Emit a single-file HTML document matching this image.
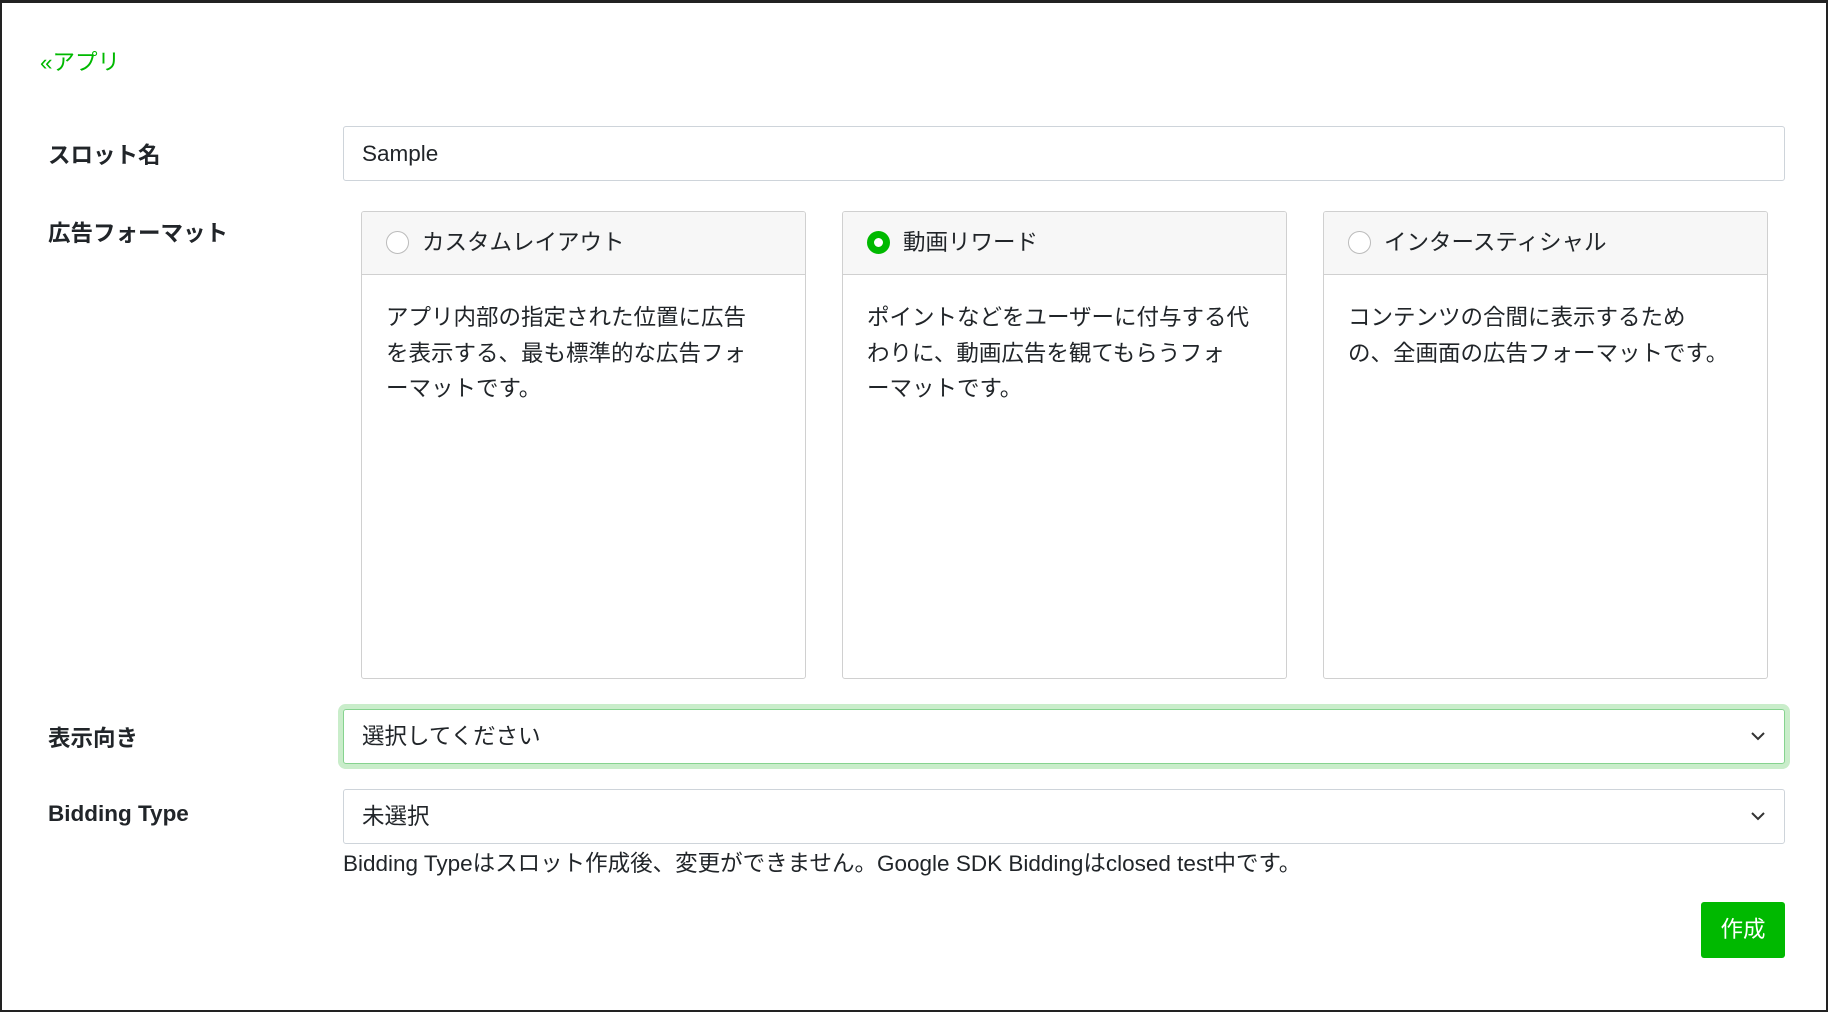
<!DOCTYPE html>
<html><head><meta charset="utf-8">
<style>
*{box-sizing:border-box;margin:0;padding:0}
body{width:1828px;height:1012px;background:#fff;font-family:"Liberation Sans","Noto Sans CJK JP",sans-serif;color:#212529;font-size:22.5px;position:relative;overflow:hidden}
.frame{position:absolute;left:0;top:0;width:1828px;height:1012px;border:2px solid #222;border-top-width:3px}
.abs{position:absolute}
.link{left:40px;top:45px;color:#00b900;font-size:22.5px}
.lbl{left:48px;font-weight:bold;font-size:22.5px}
.input{left:343px;width:1442px;height:55px;border:1px solid #ced4da;border-radius:3px;padding-left:18px;line-height:53px}
.card{top:211px;width:445px;height:468px;border:1px solid #d0d0d0;border-radius:3px;overflow:hidden}
.card .hd{height:63px;background:#f7f7f7;border-bottom:1px solid #d0d0d0;position:relative}
.card .hd .r{position:absolute;left:24px;top:19px;width:23px;height:23px;border-radius:50%;border:1.5px solid #bbb;background:#fff}
.card .hd .r.on{border:7px solid #00b900}
.card .hd span{position:absolute;left:60px;top:0;line-height:62px;white-space:nowrap}
.card .bd{padding:25px 0 0 24px;line-height:35.5px;white-space:nowrap}
.sel{left:343px;width:1442px;height:55px;border:1px solid #ced4da;border-radius:3px;padding-left:18px;line-height:53px}
.sel svg{position:absolute;right:18px;top:20px}
.btn{left:1701px;top:902px;width:84px;height:56px;background:#00b900;color:#fff;border-radius:3px;text-align:center;line-height:56px;font-size:22.5px}
</style></head><body>
<div class="frame"></div>
<div class="abs link">«アプリ</div>

<div class="abs lbl" style="top:138px">スロット名</div>
<div class="abs input" style="top:126px">Sample</div>

<div class="abs lbl" style="top:216px">広告フォーマット</div>
<div class="abs card" style="left:361px">
 <div class="hd"><div class="r"></div><span>カスタムレイアウト</span></div>
 <div class="bd">アプリ内部の指定された位置に広告<br>を表示する、最も標準的な広告フォ<br>ーマットです。</div>
</div>
<div class="abs card" style="left:842px">
 <div class="hd"><div class="r on"></div><span>動画リワード</span></div>
 <div class="bd">ポイントなどをユーザーに付与する代<br>わりに、動画広告を観てもらうフォ<br>ーマットです。</div>
</div>
<div class="abs card" style="left:1323px">
 <div class="hd"><div class="r"></div><span>インタースティシャル</span></div>
 <div class="bd">コンテンツの合間に表示するため<br>の、全画面の広告フォーマットです。</div>
</div>

<div class="abs lbl" style="top:721px">表示向き</div>
<div class="abs sel" style="top:709px;border-color:#86d38f;box-shadow:0 0 0 5px #c9edca">選択してください
<svg width="16" height="12" viewBox="0 0 16 12"><path d="M2 3l6 6 6-6" fill="none" stroke="#333" stroke-width="2"/></svg></div>

<div class="abs lbl" style="top:801px">Bidding Type</div>
<div class="abs sel" style="top:789px">未選択
<svg width="16" height="12" viewBox="0 0 16 12"><path d="M2 3l6 6 6-6" fill="none" stroke="#333" stroke-width="2"/></svg></div>

<div class="abs" style="left:343px;top:846px">Bidding Typeはスロット作成後、変更ができません。Google SDK Biddingはclosed test中です。</div>

<div class="abs btn">作成</div>
</body></html>
